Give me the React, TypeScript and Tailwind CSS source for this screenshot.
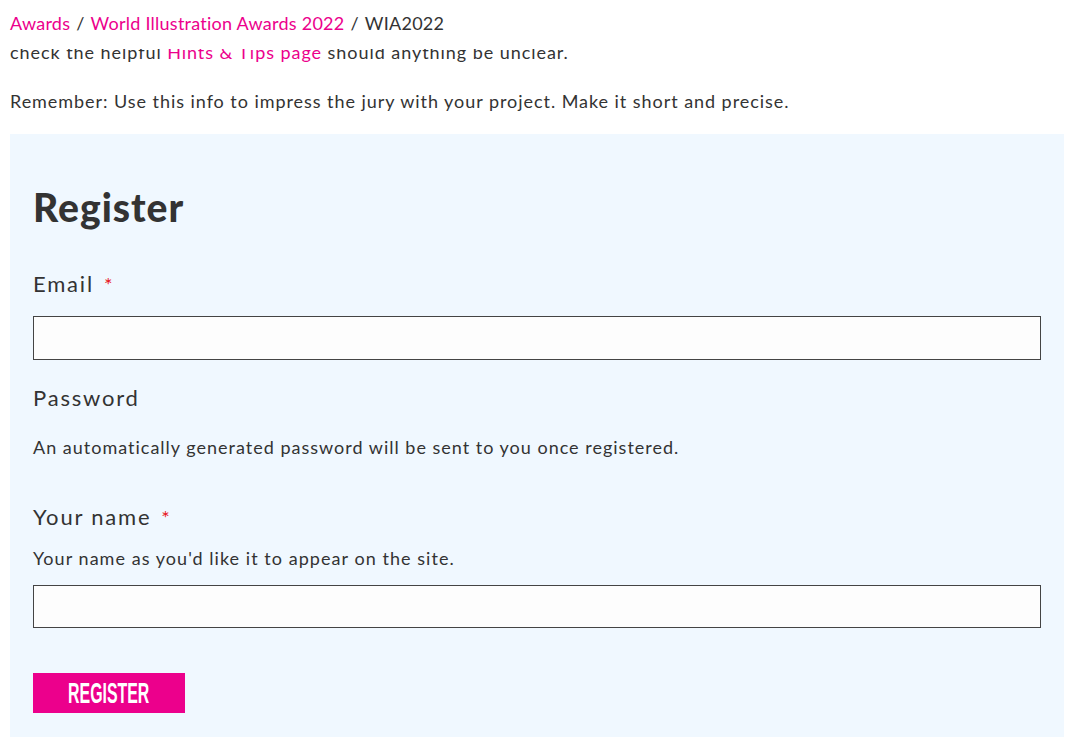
import React from 'react'

const body = "font-['Lato','Liberation_Sans',sans-serif]"

function Label({ text, required }: { text: string; required?: boolean }) {
  return (
    <div className="text-[22px] leading-[32px] tracking-[1.8px] text-[#333]">
      {text}
      {required && <span className="ml-2.5 text-[20px] align-top text-[#e8141c]">*</span>}
    </div>
  )
}

export default function App() {
  return (
    <div className={`${body} bg-white text-[#333] min-h-[751px] overflow-hidden`}>
      {/* breadcrumb bar, sits over the scrolled page */}
      <div className="h-[49px] px-2.5 pb-[3px] flex items-center text-[18px] tracking-[0.25px]">
        <a className="text-[#ec008c]">Awards</a>
        <span className="mx-1.5">/</span>
        <a className="text-[#ec008c]">World Illustration Awards 2022</a>
        <span className="mx-1.5">/</span>
        <span>WIA2022</span>
      </div>

      <div className="h-[13px] overflow-hidden px-2.5">
        <p className="-mt-[11px] text-[18px] leading-[28px] tracking-[0.95px]">
          check the helpful <a className="text-[#ec008c]">Hints &amp; Tips page</a> should anything be unclear.
        </p>
      </div>

      <p className="mt-[25px] px-2.5 text-[18px] leading-[28px] tracking-[0.95px]">
        Remember: Use this info to impress the jury with your project. Make it short and precise.
      </p>

      <div className="mt-[19px] mx-2.5 w-[1054px] bg-[#f0f8ff] px-[23px] pt-[50px] pb-[24px]">
        <h1 className="text-[39px] leading-[46px] font-black tracking-[1px] text-[#333]">Register</h1>

        <div className="mt-[38px]">
          <Label text="Email" required />
          <input className="mt-4 block w-full h-[44px] bg-[#fdfdfd] border border-[#444] outline-none" />
        </div>

        <div className="mt-[22px]">
          <Label text="Password" />
          <p className="mt-[19px] text-[18px] leading-[28px] tracking-[1px]">
            An automatically generated password will be sent to you once registered.
          </p>
        </div>

        <div className="mt-[40px]">
          <Label text="Your name" required />
          <p className="mt-[11px] text-[18px] leading-[28px] tracking-[1.05px]">
            Your name as you'd like it to appear on the site.
          </p>
          <input className="mt-[13px] block w-full h-[43px] bg-[#fdfdfd] border border-[#444] outline-none" />
        </div>

        <button className="mt-[45px] w-[152px] h-[40px] bg-[#ec008c] flex items-center justify-center overflow-hidden">
          <span className="inline-block scale-x-[0.53] text-white text-[30px] leading-none font-bold font-['Liberation_Sans',sans-serif]">
            REGISTER
          </span>
        </button>
      </div>
    </div>
  )
}
